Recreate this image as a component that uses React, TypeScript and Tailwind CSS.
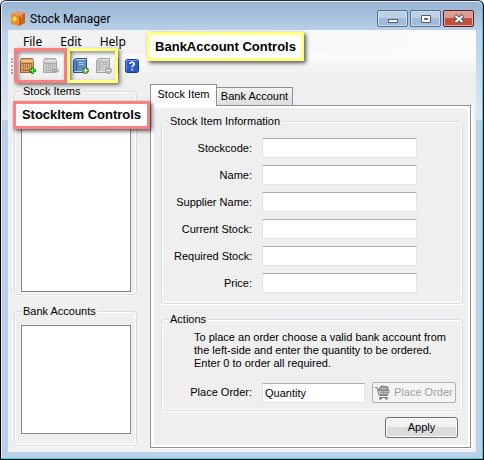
import type { ReactNode } from "react";

const fields = ["Stockcode", "Name", "Supplier Name", "Current Stock", "Required Stock", "Price"];

function Crate({ disabled = false }: { disabled?: boolean }) {
  const edge = disabled ? "#a8a8a8" : "#a5652f";
  const fill = disabled ? "#cccccc" : "#e0a468";
  const slat = disabled ? "#b4b4b4" : "#b57d48";
  return (
    <svg width="18" height="18" viewBox="0 0 18 18" aria-hidden="true">
      <path d="M3.5 1.5h11l1 3v11h-13v-11z" fill={fill} stroke={edge} />
      <path d="M3 4h12" stroke={disabled ? "#dedede" : "#f2c08a"} strokeWidth="2" />
      <path d="M4 6.5h10M4 13.5h10" stroke={edge} />
      <path d="M5.5 7v6M7.5 7v6M9.5 7v6M11.5 7v6M13.5 7v6" stroke={slat} />
      {disabled ? (
        <rect x="11.5" y="12.5" width="6" height="2" rx="1" fill="#c2c2c2" stroke="#979797" />
      ) : (
        <path d="M13.5 10.5h2v2h2v2h-2v2h-2v-2h-2v-2h2z" fill="#5df04c" stroke="#158a19" />
      )}
    </svg>
  );
}

function Book({ disabled = false }: { disabled?: boolean }) {
  const edge = disabled ? "#a3a3a3" : "#2c567f";
  return (
    <svg width="18" height="18" viewBox="0 0 18 18" aria-hidden="true">
      <path d="M3.5 1.5h11v12l-1 2h-12v-12z" fill={disabled ? "#c8c8c8" : "#5b8fbe"} stroke={edge} />
      <path d="M4 2.5h10M2.5 14.5h10" stroke={disabled ? "#e2e2e2" : "#b7d2e8"} />
      <path d="M4.5 4v10" stroke={disabled ? "#aaaaaa" : "#2f5e8c"} />
      <path d="M7 5.5h5M7 7.5h5" stroke={disabled ? "#b6b6b6" : "#a5c6e2"} />
      <circle cx="13.5" cy="13.5" r="3" fill={disabled ? "#b5b5b5" : "#5fa443"} stroke={disabled ? "#a0a0a0" : "#447f31"} />
      <path d={disabled ? "M11.5 13.5h4" : "M11.5 13.5h4M13.5 11.5v4"} stroke="#f3fff0" />
    </svg>
  );
}

function HelpIcon() {
  return (
    <svg width="16" height="16" viewBox="0 0 16 16" aria-hidden="true">
      <rect x="1.5" y="1.5" width="13" height="13" rx="2" fill="#2d58c8" stroke="#183a98" />
      <path d="M2.5 12v-9.5h11" fill="none" stroke="#6f97ea" />
      <path d="M6 6c0-2.4 4.2-2.4 4.2 0 0 1.5-2 1.4-2 3.2M8.2 10.7v1.6" fill="none" stroke="#fff" strokeWidth="1.6" />
    </svg>
  );
}

function BoxLogo() {
  return (
    <svg width="14" height="15" viewBox="0 0 14 15" aria-hidden="true">
      <path d="M0 3l6-3 8 2-6 3z" fill="#e8914e" />
      <path d="M0 3l8 2v10l-8-2z" fill="#f08a1c" />
      <path d="M8 5l6-3v10l-6 3z" fill="#c9601c" />
      <path d="M3.5 11V7M1.500 8.500l2-2.500 2 3" fill="none" stroke="#ffe04a" strokeWidth="1.500" />
      <path d="M3.500 1.500l7 2v3" fill="none" stroke="#f5b27c" />
    </svg>
  );
}

function Cart() {
  return (
    <svg width="15" height="15" viewBox="0 0 15 15" aria-hidden="true">
      <path d="M4 4l2-3 7 1v4H4z" fill="#a9a9a9" stroke="#777" />
      <path d="M0 2.500h2l2 8h8.500l1.500-5H3" fill="#d5d5d5" stroke="#808080" />
      <path d="M5 7.500h8M5 9.500h7M6.500 6v4M8.500 6v4M10.500 6v4" stroke="#999" />
      <path d="M4.500 12.500h8" stroke="#808080" />
      <circle cx="5.500" cy="13.500" r="1.200" fill="#777" />
      <circle cx="11.500" cy="13.500" r="1.200" fill="#777" />
    </svg>
  );
}

function Caption({ label, close = false, children }: { label: string; close?: boolean; children: ReactNode }) {
  return (
    <button
      aria-label={label}
      className={
        "flex h-[17px] w-[31px] items-center justify-center rounded-[2px] border bg-linear-to-b from-50% to-50% " +
        (close
          ? "border-[#541c27] from-[#dd9c90] to-[#bf5138] shadow-[inset_0_0_0_1px_#e3aaa0]"
          : "border-[#596f8d] from-[#bdd1e6] to-[#9fbbd8] shadow-[inset_0_0_0_1px_#c9dcf0]")
      }
    >
      {children}
    </button>
  );
}

function Group({
  title,
  className = "",
  legendClass = "",
  children,
}: {
  title: string;
  className?: string;
  legendClass?: string;
  children?: ReactNode;
}) {
  return (
    <fieldset className={"min-w-0 rounded-[3px] border border-[#d3dde6] shadow-[inset_0_0_0_1px_#fff,0_1px_0_#fff] " + className}>
      <legend className={"bg-[#efefef] px-[2px] leading-[13px] " + legendClass}>{title}</legend>
      {children}
    </fieldset>
  );
}

const inputStyle =
  "h-5 w-[155px] min-w-0 border border-[#dfe5ed] border-t-[#abadb3] bg-white px-[2px] leading-[13px] outline-none";

export default function App() {
  return (
    <div className="flex min-h-screen flex-col bg-white font-['Liberation_Sans',Arial,sans-serif] text-[11px] text-black">
      <div className="flex flex-1 flex-col rounded-t-[6px] border border-black border-t-[#2b2e36] bg-[#22d3ee]">
        <div className="mr-px mb-px flex flex-1 flex-col rounded-t-[5px] border-t border-l border-[#e4edf6] bg-[#b9d1ea] bg-linear-to-b from-[#98b4d2] from-0% via-[#b9d1ea] via-[29px] to-[#b9d1ea]">
          <header className="flex h-7 shrink-0 items-center pt-[5px] pr-[8px] pl-[9px]">
            <BoxLogo />
            <h1 className="ml-[5px] flex-1 font-[Roboto,'Open_Sans',sans-serif] text-[12px] leading-4">Stock Manager</h1>
            <div className="flex gap-[2px]">
              <Caption label="Minimize">
                <svg width="12" height="10" viewBox="0 0 12 10"><rect x="1.500" y="5.500" width="9" height="3" fill="#fff" stroke="#535d6d" /></svg>
              </Caption>
              <Caption label="Maximize">
                <svg width="12" height="10" viewBox="0 0 12 10"><path d="M1.500 1.500h9v7h-9zM4.500 4.500v1h3v-1z" fill="#fff" stroke="#535d6d" fillRule="evenodd" /></svg>
              </Caption>
              <Caption label="Close" close>
                <svg width="12" height="10" viewBox="0 0 12 10"><path d="M2 1.500l8 7M10 1.500l-8 7" stroke="#535666" strokeWidth="4" /><path d="M2.500 2l7 6M9.500 2l-7 6" stroke="#fff" strokeWidth="2" /></svg>
              </Caption>
            </div>
          </header>

          <div className="flex flex-1 bg-linear-to-b from-[#b9d1ea] from-0% to-[#dce8f5] to-[90px] bg-[length:100%_90px] bg-no-repeat px-[6px] pb-[6px]">
            <div className="relative flex min-w-0 flex-1 flex-col bg-[#efefef]">
              <nav className="flex h-6 items-center gap-[18px] bg-linear-to-r from-[#f0f0f0] to-[#fcfcfc] pl-[15px] font-['Noto_Sans','Open_Sans',sans-serif] text-[12px] leading-4">
                <button>File</button>
                <button>Edit</button>
                <button>Help</button>
              </nav>

              <div className="flex h-6 items-center bg-linear-to-b from-[#fcfcfc] to-[#eeeeee] pl-[3px]" role="toolbar" aria-label="Controls">
                <span className="mr-[5px] h-4 border-l-2 border-dotted border-[#a8a8a8]" />
                <button aria-label="Add stock item"><Crate /></button>
                <button aria-label="Remove stock item" disabled className="ml-[5px]"><Crate disabled /></button>
                <span className="mx-[6px] h-4 w-px bg-[#a5a5a5]" />
                <button aria-label="Add bank account"><Book /></button>
                <button aria-label="Remove bank account" disabled className="ml-[5px]"><Book disabled /></button>
                <span className="mx-[5px] h-4 w-px bg-[#a5a5a5]" />
                <button aria-label="Help"><HelpIcon /></button>
              </div>

              <main className="flex flex-1 gap-[13px] pt-[7px] pr-[5px] pb-1 pl-[6px]">
                <aside className="flex w-[123px] shrink-0 flex-col gap-[10px] pb-[2px]">
                  <Group title="Stock Items" className="flex h-[210px] flex-col pt-[9px] pr-[5px] pb-[3px] pl-[6px]">
                    <div role="listbox" aria-label="Stock Items" className="h-[185px] border border-[#828790] bg-white" />
                  </Group>
                  <Group title="Bank Accounts" className="flex-1 pt-[7px] pr-[5px] pb-[10px] pl-[6px]">
                    <div role="listbox" aria-label="Bank Accounts" className="h-[109px] border border-[#828790] bg-white" />
                  </Group>
                </aside>

                <section className="flex min-w-0 flex-1 flex-col">
                  <div className="flex h-5 items-end" role="tablist">
                    <button role="tab" aria-selected="true" className="relative z-10 -mb-px h-[22px] w-[67px] shrink-0 border border-b-0 border-[#8c8e98] bg-white pb-[2px] leading-[13px] whitespace-nowrap">
                      Stock Item
                    </button>
                    <button role="tab" aria-selected="false" className="h-[18px] w-[76px] shrink-0 border border-b-0 border-l-0 border-[#8c8e98] bg-linear-to-b from-[#f3f3f3] to-[#dddddd] leading-[13px] whitespace-nowrap">
                      Bank Account
                    </button>
                  </div>
                  <div className="flex flex-1 flex-col border border-[#8c8e98] bg-white p-[2px] pl-[3px] shadow-[2px_1px_0_#fff]" role="tabpanel">
                    <div className="flex flex-1 flex-col bg-[#efefef] pt-[7px] pr-[5px] pb-[6px] pl-[7px]">
                      <Group title="Stock Item Information" legendClass="-ml-[6px]" className="px-3 pb-[10px]">
                        <div className="mt-[10px] flex flex-col gap-[7px]">
                          {fields.map((name) => (
                            <label key={name} className="flex items-center gap-[10px]">
                              <span className="w-[78px] text-right whitespace-nowrap">{name}:</span>
                              <input className={inputStyle} />
                            </label>
                          ))}
                        </div>
                      </Group>
                      <Group title="Actions" legendClass="-ml-[6px]" className="mt-[9px] px-3 pb-[7px]">
                        <p className="mt-[5px] ml-5 leading-[13px] whitespace-nowrap">
                          To place an order choose a valid bank account from
                          <br />
                          the left-side and enter the quantity to be ordered.
                          <br />
                          Enter 0 to order all required.
                        </p>
                        <div className="mt-[12px] -mr-[7px] flex items-center gap-[7px]">
                          <label className="flex items-center gap-[10px]">
                            <span className="w-[78px] text-right whitespace-nowrap">Place Order:</span>
                            <input className={inputStyle + " max-w-[103px]"} defaultValue="Quantity" />
                          </label>
                          <button disabled className="flex h-[21px] w-[84px] shrink-0 items-center gap-[4px] rounded-[2px] border border-[#adb2b5] bg-[#f4f4f4] pl-[2px] leading-[13px] whitespace-nowrap text-[#a0a0a0]">
                            <Cart />
                            Place Order
                          </button>
                        </div>
                      </Group>
                      <button className="mt-[6px] mr-[5px] h-[21px] w-[73px] self-end rounded-[3px] border border-[#707070] bg-linear-to-b from-[#f2f2f2] from-50% to-[#dcdcdc] to-50% leading-[13px] shadow-[inset_0_0_0_1px_#fcfcfc]">
                        Apply
                      </button>
                    </div>
                  </div>
                </section>
              </main>

              <div className="pointer-events-none absolute top-[18px] left-[6px] h-[35px] w-[53px] border-3 border-[#fd8080] shadow-[2px_2px_4px_#0008,inset_2px_2px_4px_#0006]" />
              <div className="pointer-events-none absolute top-[18px] left-[59px] h-[35px] w-[51px] border-3 border-[#ffff80] shadow-[2px_2px_4px_#0008,inset_2px_2px_4px_#0006]" />
              <div className="absolute top-[2px] left-[139px] z-20 flex h-[29px] w-[157px] items-center justify-center border-3 border-[#ffff80] bg-white text-[13px] leading-4 font-bold whitespace-nowrap shadow-[2px_2px_4px_#000a]">
                BankAccount Controls
              </div>
              <div className="absolute top-[71px] left-[5px] z-20 flex h-[28px] w-[137px] items-center justify-center border-3 border-[#fd8080] bg-white text-[13px] leading-4 font-bold whitespace-nowrap shadow-[2px_2px_4px_#000a]">
                StockItem Controls
              </div>
            </div>
          </div>
        </div>
      </div>
    </div>
  );
}
